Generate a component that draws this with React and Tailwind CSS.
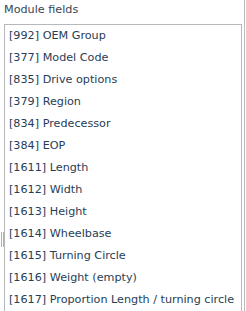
const FIELDS = [
  '[992] OEM Group',
  '[377] Model Code',
  '[835] Drive options',
  '[379] Region',
  '[834] Predecessor',
  '[384] EOP',
  '[1611] Length',
  '[1612] Width',
  '[1613] Height',
  '[1614] Wheelbase',
  '[1615] Turning Circle',
  '[1616] Weight (empty)',
  '[1617] Proportion Length / turning circle',
]

export default function App() {
  return (
    <div className="relative h-[311px] w-[246px] overflow-hidden bg-white font-['DejaVu_Sans',Verdana,sans-serif]">
      <div className="flex h-full w-[245px] flex-col border-r border-[#bdbdbd]">
        <h2 className="px-1 pt-[3px] text-[11.2px] leading-[14px] font-normal text-[#3a4654]">Module fields</h2>
        <ul className="ml-1 mt-[7px] mr-[2px] flex-1 border-t border-r border-l border-[#b8b8b8] px-1">
          {FIELDS.map((field) => (
            <li key={field} className="h-[22px] whitespace-nowrap text-[11.2px] leading-[22px] text-[#283d55]">
              {field}
            </li>
          ))}
        </ul>
      </div>

      <div className="absolute left-[1px] top-[232px] flex gap-[1px]">
        <span className="h-[15px] w-px bg-[#b0b0b0]" />
        <span className="h-[15px] w-px bg-[#b0b0b0]" />
      </div>
    </div>
  )
}
